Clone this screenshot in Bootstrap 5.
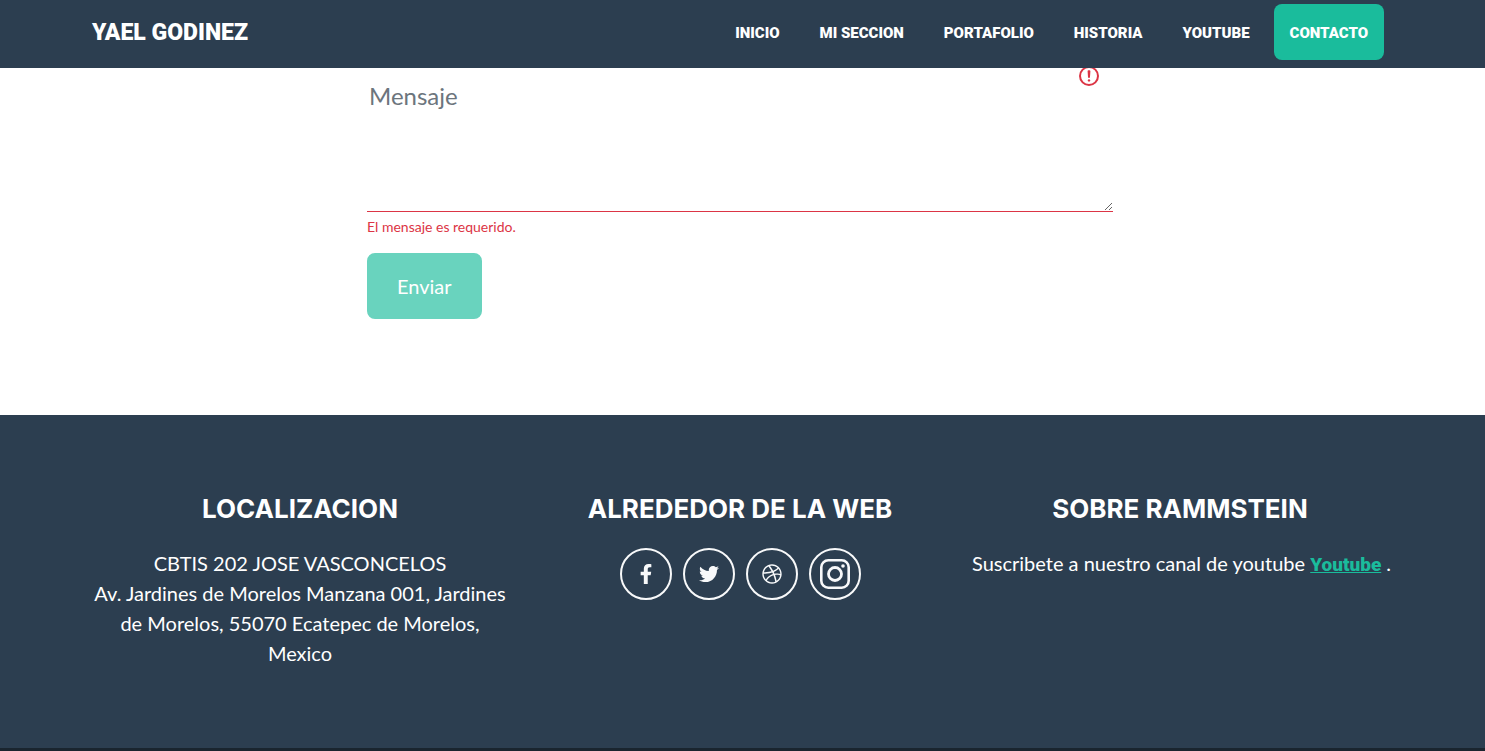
<!DOCTYPE html>
<html lang="es">
<head>
<meta charset="utf-8">
<meta name="viewport" content="width=device-width, initial-scale=1">
<title>Yael Godinez</title>
<link href="https://cdn.jsdelivr.net/npm/bootstrap@5.3.0/dist/css/bootstrap.min.css" rel="stylesheet">
<style>
  :root { --navy: #2c3e50; --teal: #1abc9c; --night: #1a252f; }
  body { font-family: Lato, "Open Sans", sans-serif; color: #212529; }
  .band { padding-right: 5px; }
  .bg-navy { background: var(--navy); }
  .bg-night { background: var(--night); }

  .main-nav { padding-top: 4px; padding-bottom: 8px; font-family: Roboto, "Liberation Sans", sans-serif; font-weight: 900; }
  .main-nav .navbar-brand { color: #fff; font-size: 23px; line-height: 38px; padding: 2px 0 0; }
  .main-nav .nav-link { color: #fff; font-size: 15px; line-height: 24px; padding-top: 17px; padding-bottom: 15px; }
  .main-nav .nav-link.active { color: #fff; background: var(--teal); }

  .contact { padding-top: 52px; padding-bottom: 96px; }
  .form-floating > .message-box.form-control { height: 160px; padding: 26px 2px 16px; font-size: 24px; border-color: #dc3545; border-width: 0 0 1px; border-radius: 0; background-size: 24px 24px; background-position: top 12px right 12px; }
  .form-floating > .message-label { padding: 26px 2px; font-size: 24px; line-height: 36px; color: #6c757d; opacity: 1; border: 0; }
  .form-floating > .message-label::after { display: none; }
  .contact .invalid-feedback { color: #dc3545; }
  .btn-send { --bs-btn-padding-x: 28px; --bs-btn-padding-y: 16px; --bs-btn-border-width: 2px; --bs-btn-font-size: 20px; --bs-btn-border-radius: 8px;
    --bs-btn-disabled-bg: var(--teal); --bs-btn-disabled-border-color: var(--teal); --bs-btn-disabled-color: #fff; line-height: 30px; }

  .site-footer { padding-top: 80px; padding-bottom: 80px; color: #fff; }
  .site-footer h2 { font: 700 26px/28px Inter, "Open Sans", sans-serif; margin-bottom: 25px; }
  .site-footer p { font-size: 20px; line-height: 30px; }
  .site-footer p a { color: var(--teal); font-family: Roboto, sans-serif; font-weight: 900; font-size: 19px; }
  .socials { gap: 11px; }
  .btn-social { --bs-btn-border-width: 2px; width: 52px; height: 52px; }
</style>
</head>
<body class="d-flex flex-column min-vh-100">
<nav class="navbar navbar-expand-lg fixed-top bg-navy band main-nav">
  <div class="container">
    <a class="navbar-brand" href="#inicio">YAEL GODINEZ</a>
    <ul class="navbar-nav ms-auto">
      <li class="nav-item mx-1"><a class="nav-link px-3" href="#inicio">INICIO</a></li>
      <li class="nav-item mx-1"><a class="nav-link px-3" href="#seccion">MI SECCION</a></li>
      <li class="nav-item mx-1"><a class="nav-link px-3" href="#portafolio">PORTAFOLIO</a></li>
      <li class="nav-item mx-1"><a class="nav-link px-3" href="#historia">HISTORIA</a></li>
      <li class="nav-item mx-1"><a class="nav-link px-3" href="#youtube">YOUTUBE</a></li>
      <li class="nav-item mx-1"><a class="nav-link px-3 rounded-3 active" href="#contacto">CONTACTO</a></li>
    </ul>
  </div>
</nav>

<section class="contact band" id="contacto">
  <div class="container">
    <div class="row justify-content-center">
      <form class="col-lg-8 col-xl-7">
        <div class="form-floating mb-3">
          <textarea class="form-control message-box is-invalid" id="mensaje" placeholder="Mensaje"></textarea>
          <label class="message-label" for="mensaje">Mensaje</label>
          <div class="invalid-feedback d-block">El mensaje es requerido.</div>
        </div>
        <button class="btn btn-send d-block" type="submit" disabled>Enviar</button>
      </form>
    </div>
  </div>
</section>

<footer class="site-footer bg-navy band text-center">
  <div class="container">
    <div class="row">
      <div class="col-lg-4">
        <h2>LOCALIZACION</h2>
        <p class="mb-0">CBTIS 202 JOSE VASCONCELOS<br>Av. Jardines de Morelos Manzana 001, Jardines de Morelos, 55070 Ecatepec de Morelos, Mexico</p>
      </div>
      <div class="col-lg-4">
        <h2>ALREDEDOR DE LA WEB</h2>
        <div class="socials d-flex justify-content-center">
          <a class="btn btn-outline-light btn-social rounded-circle d-flex align-items-center justify-content-center p-0" href="#facebook" aria-label="Facebook">
            <svg width="20" height="20" viewBox="0 0 320 512" fill="currentColor"><path d="M279.14 288l14.22-92.66h-88.91v-60.13c0-25.35 12.42-50.06 52.24-50.06h40.42V6.26S260.43 0 225.36 0c-73.22 0-121.08 44.38-121.08 124.72v70.62H22.89V288h81.39v224h100.17V288z"/></svg>
          </a>
          <a class="btn btn-outline-light btn-social rounded-circle d-flex align-items-center justify-content-center p-0" href="#twitter" aria-label="Twitter">
            <svg width="20" height="20" viewBox="0 0 512 512" fill="currentColor"><path d="M459.37 151.716c.325 4.548.325 9.097.325 13.645 0 138.72-105.583 298.558-298.558 298.558-59.452 0-114.68-17.219-161.137-47.106 8.447.974 16.568 1.299 25.34 1.299 49.055 0 94.213-16.568 130.274-44.832-46.132-.975-84.792-31.188-98.112-72.772 6.498.974 12.995 1.624 19.818 1.624 9.421 0 18.843-1.3 27.614-3.573-48.081-9.747-84.143-51.98-84.143-102.985v-1.299c13.969 7.797 30.214 12.67 47.431 13.319-28.264-18.843-46.781-51.005-46.781-87.391 0-19.492 5.197-37.36 14.294-52.954 51.655 63.675 129.3 105.258 216.365 109.807-1.624-7.797-2.599-15.918-2.599-24.04 0-57.828 46.782-104.934 104.934-104.934 30.213 0 57.502 12.67 76.67 33.137 23.715-4.548 46.456-13.32 66.599-25.34-7.798 24.366-24.366 44.833-46.132 57.827 21.117-2.273 41.584-8.122 60.426-16.243-14.292 20.791-32.161 39.308-52.628 54.253z"/></svg>
          </a>
          <a class="btn btn-outline-light btn-social rounded-circle d-flex align-items-center justify-content-center p-0" href="#dribbble" aria-label="Dribbble">
            <svg width="20" height="20" viewBox="0 0 512 512" fill="currentColor"><path d="M256 8C119.252 8 8 119.252 8 256s111.252 248 248 248 248-111.252 248-248S392.748 8 256 8zm163.97 114.366c29.503 36.046 47.369 81.957 47.835 131.955-6.984-1.477-77.018-15.682-147.502-6.818-5.752-14.041-11.181-26.393-18.617-41.614 78.321-31.977 113.818-77.482 118.284-83.523zM396.421 97.87c-3.81 5.427-35.697 48.286-111.021 76.519-34.712-63.776-73.185-116.168-79.04-124.008 67.176-16.193 137.966 1.27 190.061 47.489zm-230.48-33.25c5.585 7.659 43.438 60.116 78.537 122.509-99.087 26.313-186.36 25.934-195.834 25.809C62.38 147.205 106.678 92.573 165.941 64.62zM44.17 256.323c0-2.166.043-4.322.108-6.473 9.268.19 111.92 1.513 217.706-30.146 6.064 11.868 11.857 23.915 17.174 35.949-76.599 21.575-146.194 83.527-180.531 142.306C64.794 360.405 44.17 310.73 44.17 256.323zm81.807 167.113c22.127-45.233 82.178-103.622 167.579-132.756 29.74 77.283 42.039 142.053 45.189 160.638-68.112 29.013-150.015 21.053-212.768-27.882zm248.38 8.489c-2.171-12.886-13.446-74.897-41.152-151.033 66.38-10.626 124.7 6.768 131.947 9.055-9.442 58.941-43.273 109.844-90.795 141.978z"/></svg>
          </a>
          <a class="btn btn-outline-light btn-social rounded-circle d-flex align-items-center justify-content-center p-0" href="#instagram" aria-label="Instagram">
            <svg width="30" height="30" viewBox="0 0 30 30" fill="none" stroke="currentColor"><rect x="1.3" y="1.3" width="27.4" height="27.4" rx="7" stroke-width="2.6"/><circle cx="15" cy="15" r="6.5" stroke-width="2.8"/><circle cx="23" cy="7" r="1.8" fill="currentColor" stroke="none"/></svg>
          </a>
        </div>
      </div>
      <div class="col-lg-4">
        <h2>SOBRE RAMMSTEIN</h2>
        <p class="mb-0 text-nowrap">Suscribete a nuestro canal de youtube <a href="#youtube">Youtube</a> .</p>
      </div>
    </div>
  </div>
</footer>
<div class="bg-night flex-grow-1"></div>
<script src="https://cdn.jsdelivr.net/npm/bootstrap@5.3.0/dist/js/bootstrap.bundle.min.js"></script>
</body>
</html>
